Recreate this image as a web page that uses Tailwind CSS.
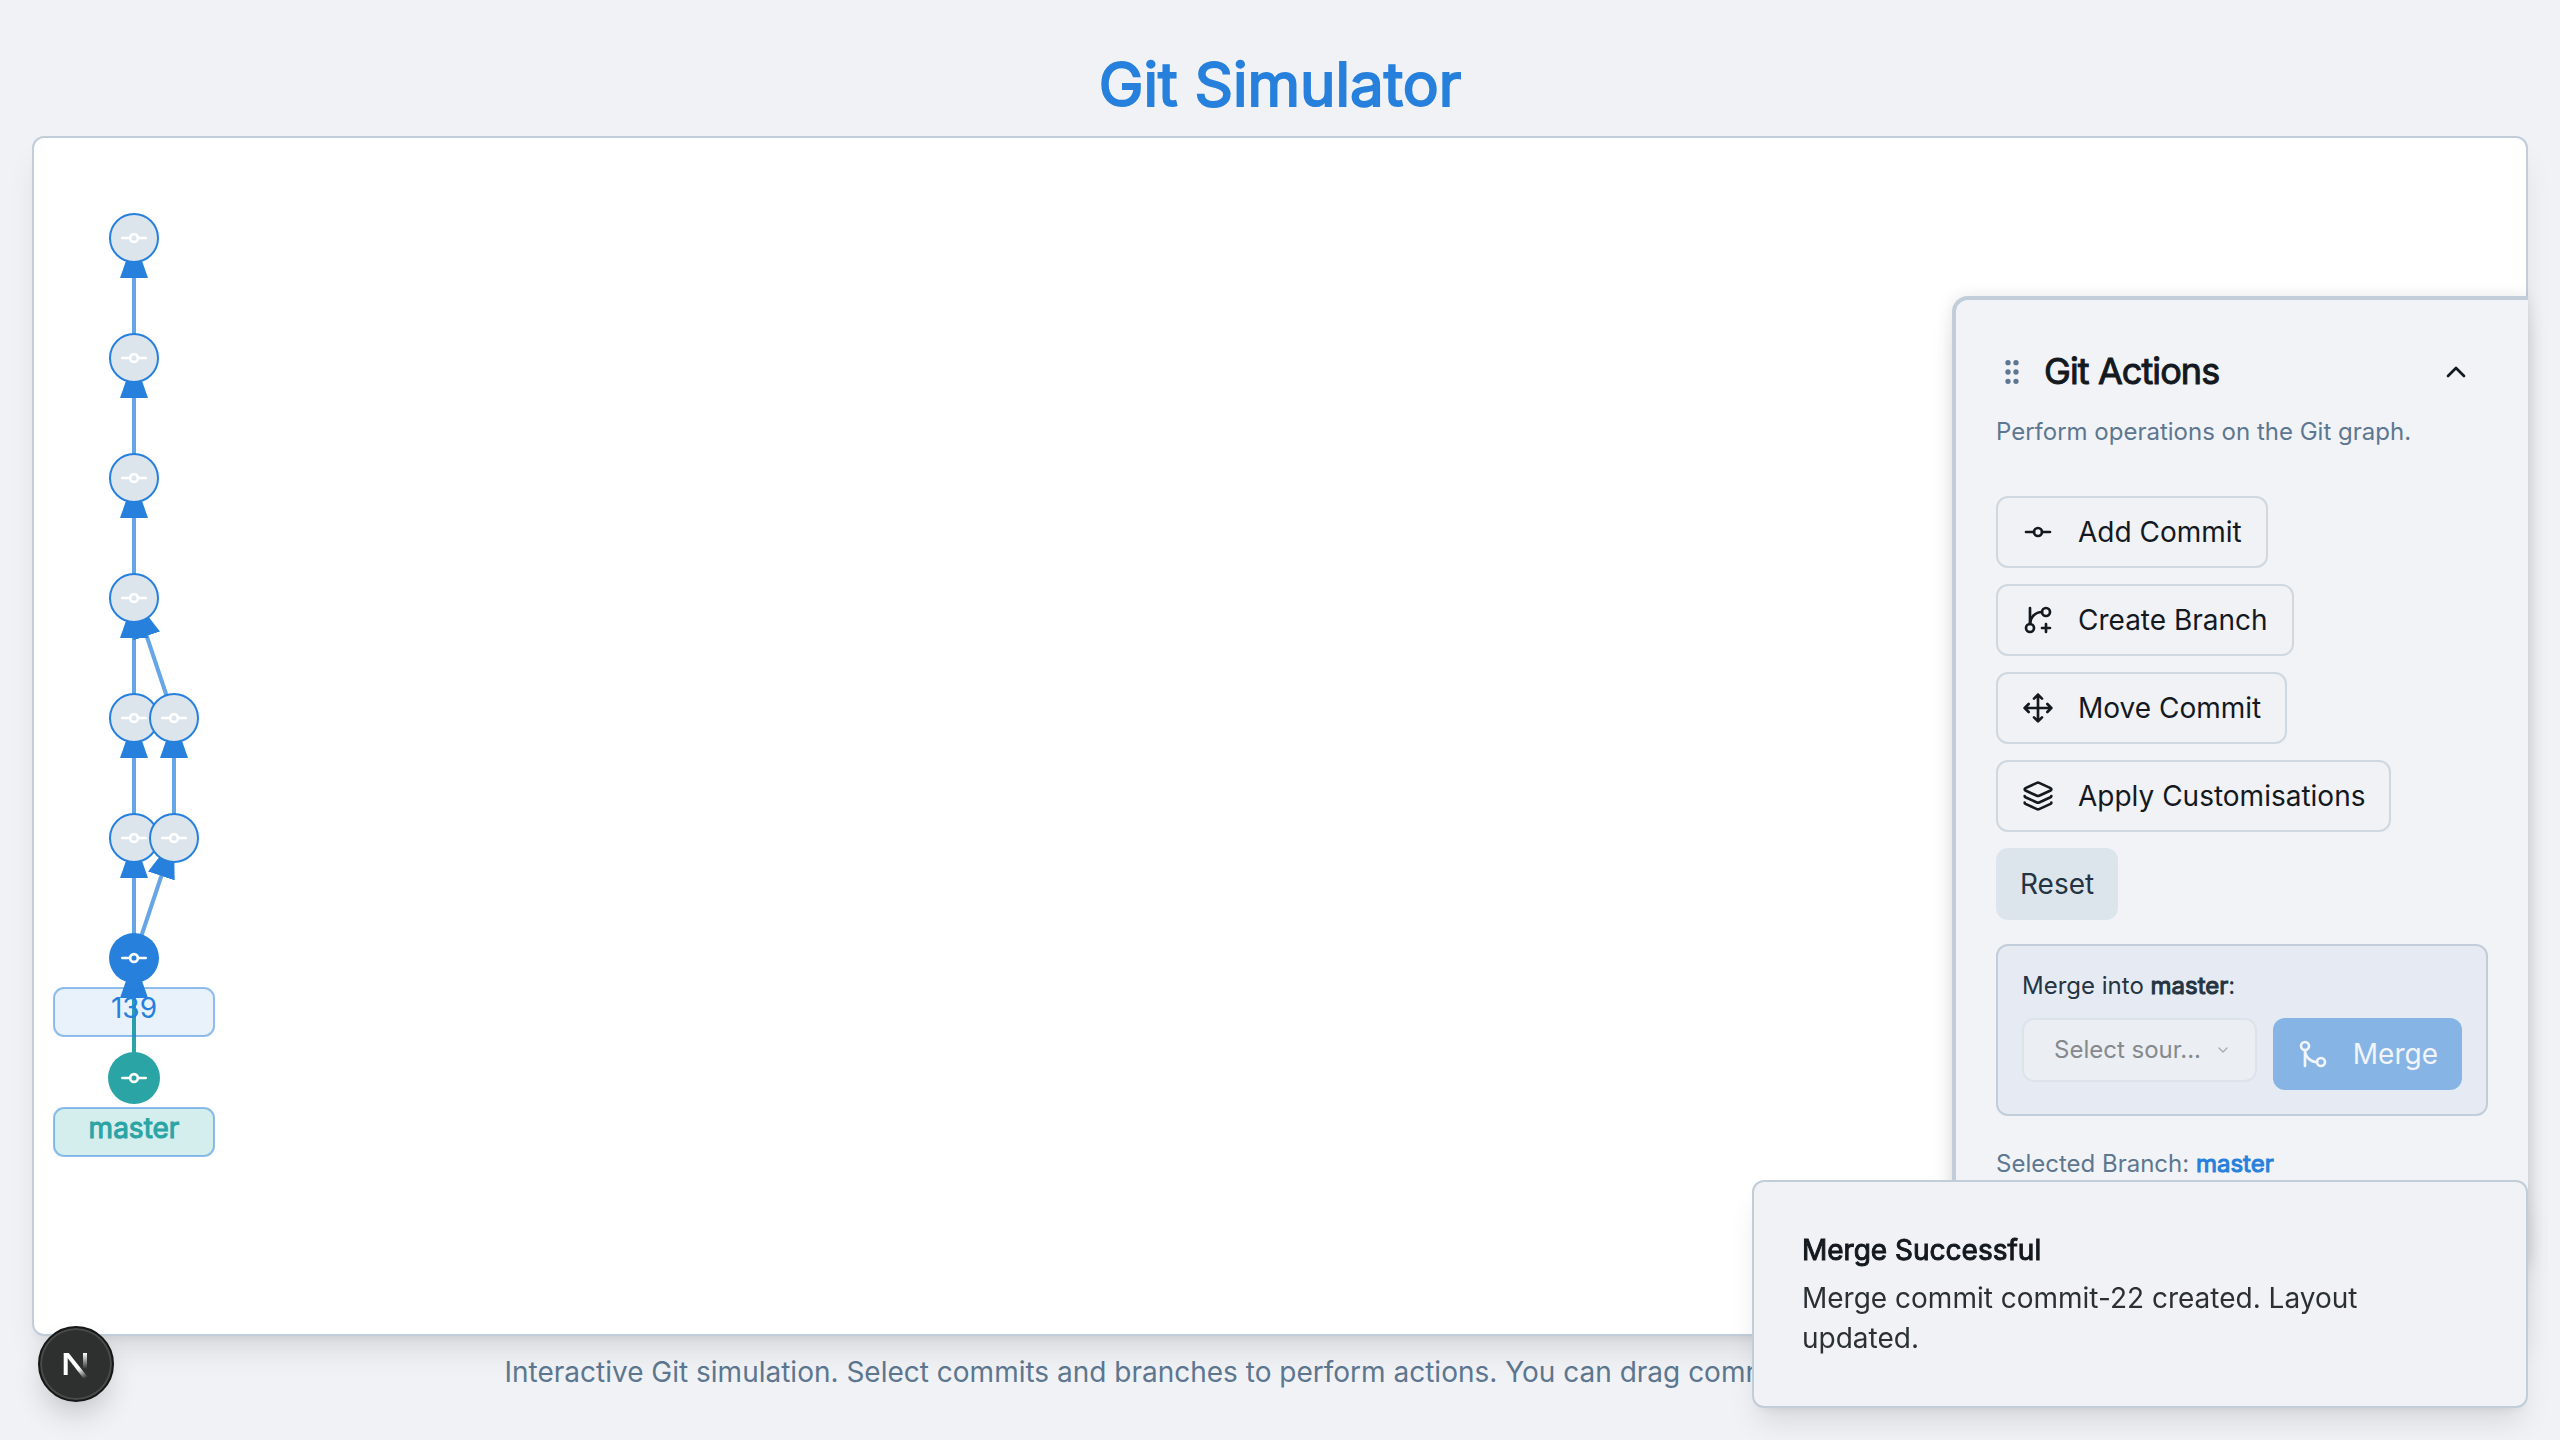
<!DOCTYPE html>
<html lang="en">
<head>
<meta charset="utf-8">
<meta name="viewport" content="width=device-width, initial-scale=1">
<title>Git Simulator</title>
<script src="https://cdn.jsdelivr.net/npm/@tailwindcss/browser@4"></script>
</head>
<body class="flex min-h-screen flex-col bg-[#f0f2f6] px-8 pt-12 pb-12 font-['Inter',sans-serif] text-[28px] leading-10 text-[#14191f]">

<header class="pb-4 text-center">
  <h1 class="text-6xl leading-[72px] font-normal text-[#2680dc] [-webkit-text-stroke:2px_#2680dc]">Git Simulator</h1>
</header>

<main class="relative flex flex-1 rounded-xl border-2 border-[#c1cdd8] bg-white shadow-[0_20px_30px_-6px_rgba(0,0,0,0.1),0_8px_12px_-8px_rgba(0,0,0,0.1)]">
  <svg class="flex-1" role="img" aria-label="Commit graph">
    <defs>
      <marker id="arrow" markerWidth="10" markerHeight="7" refX="10" refY="3.5" orient="auto"><path d="M0 0 10 3.5 0 7z" fill="#2680dc"/></marker>
      <g id="commit" fill="none" stroke="#fff" stroke-width="2.6" stroke-linecap="round"><circle r="3.9"/><path d="M-11.7 0h7.8M3.9 0h7.8"/></g>
      <g id="node"><circle r="24" fill="#dde5ec" stroke="#2680dc" stroke-width="2"/><use href="#commit"/></g>
    </defs>
    <!-- links, child to parent -->
    <g stroke="#2680dc" stroke-opacity="0.7" stroke-width="4">
      <path d="M100 220V100" marker-end="url(#arrow)"/>
      <path d="M100 340V220" marker-end="url(#arrow)"/>
      <path d="M100 460V340" marker-end="url(#arrow)"/>
      <path d="M100 580V460" marker-end="url(#arrow)"/>
      <path d="M140 580L100 460" marker-end="url(#arrow)"/>
      <path d="M100 700V580" marker-end="url(#arrow)"/>
      <path d="M140 700V580" marker-end="url(#arrow)"/>
      <path d="M100 820V700" marker-end="url(#arrow)"/>
      <path d="M100 820L140 700" marker-end="url(#arrow)"/>
    </g>
    <path d="M100 940V820" stroke="#2aa4a4" stroke-width="4" marker-end="url(#arrow)"/>
    <!-- commits -->
    <use href="#node" x="100" y="100"/>
    <use href="#node" x="100" y="220"/>
    <use href="#node" x="100" y="340"/>
    <use href="#node" x="100" y="460"/>
    <use href="#node" x="100" y="580"/>
    <use href="#node" x="100" y="700"/>
    <use href="#node" x="140" y="580"/>
    <use href="#node" x="140" y="700"/>
    <circle cx="100" cy="820" r="25" fill="#2680dc"/><use href="#commit" x="100" y="820"/>
    <circle cx="100" cy="940" r="26" fill="#2aa4a4"/><use href="#commit" x="100" y="940"/>
    <!-- branch labels -->
    <g stroke="#2680dc" stroke-opacity="0.5" stroke-width="2">
      <rect x="20" y="850" width="160" height="48" rx="10" fill="#2680dc" fill-opacity="0.1"/>
      <rect x="20" y="970" width="160" height="48" rx="10" fill="#2aa4a4" fill-opacity="0.2"/>
    </g>
    <text x="100" y="880" text-anchor="middle" font-size="28" fill="#2680dc">139</text>
    <text x="100" y="1000" text-anchor="middle" font-size="28" fill="#2aa4a4" stroke="#2aa4a4" stroke-width="1">master</text>
  </svg>

  <section aria-label="Git Actions" class="absolute top-[158px] -right-0.5 flex w-[576px] flex-col rounded-tl-2xl border-t-4 border-l-4 border-[#c1cdd8] bg-[#f1f3f7] px-10 pt-10 pb-20 shadow-[0_20px_30px_-6px_rgba(0,0,0,0.1),0_0_16px_rgba(0,0,0,0.1)]">
    <div class="flex h-16 items-center">
      <svg class="size-8 text-[#5d7790]" viewBox="0 0 24 24" fill="currentColor" stroke="currentColor" stroke-width="2"><circle cx="9" cy="12" r="1"/><circle cx="9" cy="5" r="1"/><circle cx="9" cy="19" r="1"/><circle cx="15" cy="12" r="1"/><circle cx="15" cy="5" r="1"/><circle cx="15" cy="19" r="1"/></svg>
      <h2 class="ml-4 flex-1 pb-0.5 text-4xl font-normal tracking-tight [-webkit-text-stroke:1px_#14191f]">Git Actions</h2>
      <button class="flex size-16 items-center justify-center" aria-label="Collapse"><svg class="size-8" viewBox="0 0 24 24" fill="none" stroke="currentColor" stroke-width="2" stroke-linecap="round" stroke-linejoin="round"><path d="m18 15-6-6-6 6"/></svg></button>
    </div>
    <p class="mt-2 text-2xl leading-10 text-[#5d7790]">Perform operations on the Git graph.</p>
    <div class="mt-11 flex flex-col items-start gap-4">
      <button class="flex h-18 items-center gap-6 rounded-xl border-2 border-[#cfd8e0] bg-[#f0f2f6] px-6">
        <svg class="size-8" viewBox="0 0 24 24" fill="none" stroke="currentColor" stroke-width="2" stroke-linecap="round" stroke-linejoin="round"><circle cx="12" cy="12" r="3"/><path d="M3 12h6M15 12h6"/></svg>Add Commit</button>
      <button class="flex h-18 items-center gap-6 rounded-xl border-2 border-[#cfd8e0] bg-[#f0f2f6] px-6">
        <svg class="size-8" viewBox="0 0 24 24" fill="none" stroke="currentColor" stroke-width="2" stroke-linecap="round" stroke-linejoin="round"><path d="M6 3v12"/><path d="M18 9a3 3 0 1 0 0-6 3 3 0 0 0 0 6z"/><path d="M6 21a3 3 0 1 0 0-6 3 3 0 0 0 0 6z"/><path d="M15 6a9 9 0 0 0-9 9"/><path d="M18 15v6M21 18h-6"/></svg>Create Branch</button>
      <button class="flex h-18 items-center gap-6 rounded-xl border-2 border-[#cfd8e0] bg-[#f0f2f6] px-6">
        <svg class="size-8" viewBox="0 0 24 24" fill="none" stroke="currentColor" stroke-width="2" stroke-linecap="round" stroke-linejoin="round"><path d="M12 2v20M2 12h20M15 19l-3 3-3-3M19 9l3 3-3 3M5 9l-3 3 3 3M9 5l3-3 3 3"/></svg>Move Commit</button>
      <button class="flex h-18 items-center gap-6 rounded-xl border-2 border-[#cfd8e0] bg-[#f0f2f6] px-6">
        <svg class="size-8" viewBox="0 0 24 24" fill="none" stroke="currentColor" stroke-width="2" stroke-linecap="round" stroke-linejoin="round"><path d="M12.83 2.18a2 2 0 0 0-1.66 0L2.6 6.08a1 1 0 0 0 0 1.83l8.58 3.91a2 2 0 0 0 1.66 0l8.58-3.9a1 1 0 0 0 0-1.83z"/><path d="M2 12a1 1 0 0 0 .58.91l8.6 3.91a2 2 0 0 0 1.65 0l8.58-3.9A1 1 0 0 0 22 12"/><path d="M2 17a1 1 0 0 0 .58.91l8.6 3.91a2 2 0 0 0 1.65 0l8.58-3.9A1 1 0 0 0 22 17"/></svg>Apply Customisations</button>
      <button class="flex h-18 items-center rounded-xl bg-[#dde5ec] px-6 text-[#243442]">Reset</button>
    </div>
    <div class="mt-6 rounded-xl border-2 border-[#c1cdd8] bg-[#e6ebf3] p-6">
      <label for="source" class="block text-2xl leading-8 text-[#243442]">Merge into <strong class="font-normal [-webkit-text-stroke:1px_#243442]">master</strong>:</label>
      <div class="mt-4 flex items-start gap-4">
        <div class="relative flex-1">
          <select id="source" disabled class="block h-16 w-full appearance-none rounded-xl border-2 border-[#dde3ea] bg-[#ebeef3] pl-[30px] text-2xl text-[#85898d] opacity-100"><option>Select sour...</option></select>
          <svg class="pointer-events-none absolute inset-y-0 right-[26px] my-auto size-4 text-[#a9adb2]" viewBox="0 0 24 24" fill="none" stroke="currentColor" stroke-width="2" stroke-linecap="round" stroke-linejoin="round"><path d="m6 9 6 6 6-6"/></svg>
        </div>
        <button disabled class="flex h-18 items-center gap-6 rounded-xl bg-[#86b4e5] px-6 text-[#f2f5f9]">
          <svg class="size-8" viewBox="0 0 24 24" fill="none" stroke="currentColor" stroke-width="2" stroke-linecap="round" stroke-linejoin="round"><circle cx="18" cy="18" r="3"/><circle cx="6" cy="6" r="3"/><path d="M6 21V9a9 9 0 0 0 9 9"/></svg>Merge</button>
      </div>
    </div>
    <p class="mt-7 text-2xl leading-10 text-[#5d7790]">Selected Branch: <strong class="font-normal text-[#2680dc] [-webkit-text-stroke:1px_#2680dc]">master</strong></p>
  </section>
</main>

<footer class="mt-4 text-center text-[#5d7790]">Interactive Git simulation. Select commits and branches to perform actions. You can drag commits to reposition them.</footer>

<div role="status" class="fixed right-8 bottom-8 w-[776px] rounded-xl border-2 border-[#c1cdd8] bg-[#f0f2f6] p-12 shadow-[0_20px_30px_-6px_rgba(0,0,0,0.1),0_8px_12px_-8px_rgba(0,0,0,0.1)]">
  <h3 class="font-normal [-webkit-text-stroke:1px_#14191f]">Merge Successful</h3>
  <p class="mt-2 text-[#2b3035]">Merge commit commit-22 created. Layout updated.</p>
</div>

<button aria-label="Next.js dev tools" class="fixed bottom-[38px] left-[38px] flex size-19 items-center justify-center rounded-full border-2 border-[#171717] bg-[#2e2f2f] shadow-[inset_0_0_0_2px_#4a4a4a,0_16px_32px_-8px_rgba(0,0,0,0.24)]">
  <svg class="size-10" viewBox="0 0 40 40" fill="none">
    <defs>
      <linearGradient id="diag" x1="24" y1="24" x2="30" y2="34" gradientUnits="userSpaceOnUse"><stop stop-color="#fff"/><stop offset="1" stop-color="#fff" stop-opacity="0"/></linearGradient>
      <linearGradient id="stem" x1="29" y1="9" x2="29" y2="25" gradientUnits="userSpaceOnUse"><stop stop-color="#fff"/><stop offset="1" stop-color="#fff" stop-opacity="0"/></linearGradient>
    </defs>
    <path d="M9.700 31V9" stroke="#fff" stroke-width="4"/>
    <path d="M7.700 9h5l19 24-3 3z" fill="url(#diag)"/>
    <path d="M29 9v16" stroke="url(#stem)" stroke-width="4"/>
  </svg>
</button>
</body>
</html>
